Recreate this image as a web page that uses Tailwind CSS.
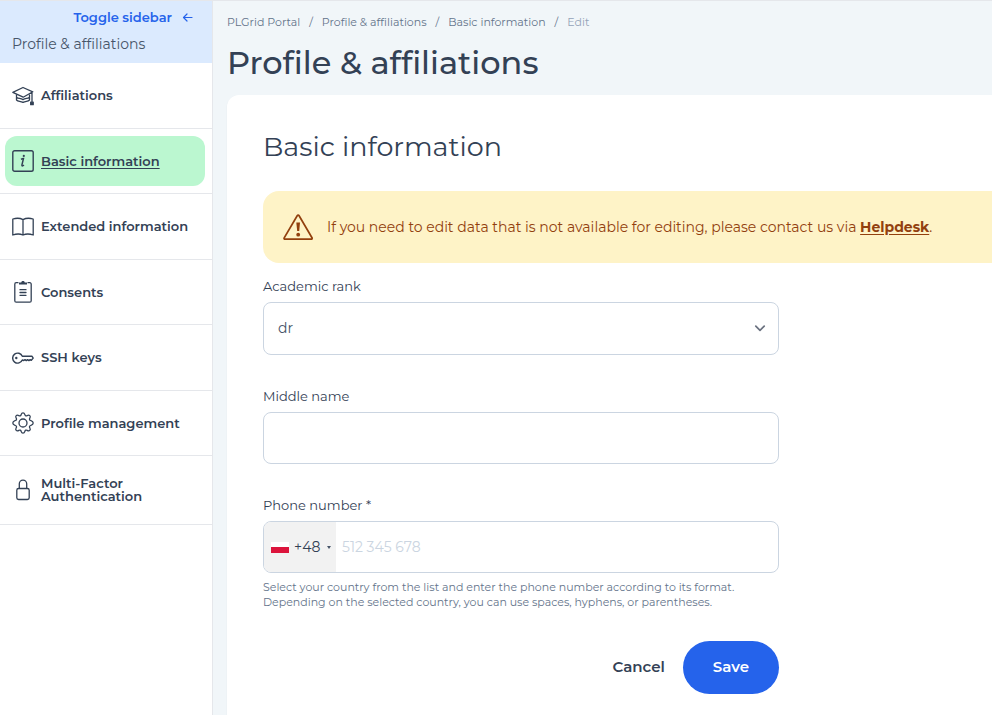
<!DOCTYPE html>
<html lang="en">
<head>
<meta charset="utf-8">
<meta name="viewport" content="width=device-width, initial-scale=1">
<title>Profile &amp; affiliations</title>
<script src="https://cdn.jsdelivr.net/npm/@tailwindcss/browser@4"></script>
</head>
<body class="flex min-h-screen overflow-x-hidden border-t border-[#e5e7eb] bg-[#f1f6f9] font-[Montserrat,Inter,sans-serif] text-[#334155]">
  <aside class="w-[213px] shrink-0 border-r border-[#e5e7eb] bg-white">
    <header class="flex h-[62px] flex-col justify-between bg-[#dbeafe] pt-[6px] pb-[9px]">
      <button type="button" class="flex items-center justify-end gap-[10px] pr-[19px] text-[13px] leading-5 font-semibold text-[#2563eb]">
        Toggle sidebar
        <svg class="size-[11px]" viewBox="0 0 11 11" fill="none" stroke="currentColor" stroke-width="1.2" stroke-linecap="round" stroke-linejoin="round"><path d="M10 5.5H1.5M5 2 1.5 5.500 5 9"/></svg>
      </button>
      <p class="pl-3 text-[14px] leading-5 text-[#475569]">Profile &amp; affiliations</p>
    </header>
    <nav aria-label="Profile">
      <ul class="text-[13px] leading-[13px] font-semibold">
        <li class="flex border-b border-[#e5e7eb] p-[7px] pl-[5px] odd:min-h-[66px] even:min-h-[65px]">
          <a href="#" class="flex flex-1 items-center gap-[7px] rounded-xl px-[7px]">
            <svg class="size-[22px] shrink-0" viewBox="0 0 22 22" fill="none" stroke="currentColor" stroke-width="1.3" stroke-linejoin="round" stroke-linecap="round"><path d="M.8 7.3 11 2.5l9.8 4.3-9.6 5.4zM20 7.5v9"/><path d="M4.500 10v2.200c1.700 1.700 3.800.8 6.500 2.400 2.700-1.600 4.800-.7 6.500-2.400V10"/><path d="M4.500 12.700V15c1.700 1.700 3.800.8 6.500 2.400 2.700-1.600 4.800-.7 6.500-2.400v-2.300"/><path d="M18.700 17.200h2.500v2.500h-2.500z" fill="currentColor"/></svg>
            Affiliations
          </a>
        </li>
        <li class="flex border-b border-[#e5e7eb] p-[7px] pl-[5px] odd:min-h-[66px] even:min-h-[65px]">
          <a href="#" aria-current="page" class="flex flex-1 items-center gap-[7px] rounded-xl bg-[#bbf7d0] px-[7px] underline underline-offset-2">
            <svg class="size-[22px] shrink-0" viewBox="0 0 22 22" fill="none" stroke="currentColor" stroke-width="1.4"><rect x=".8" y=".8" width="20.400" height="20.400" rx="1.800"/><path d="M9 9.300c1-.6 1.800-.9 2.500-.8L9.900 15.200c-.1.900.8.900 2.100 0" stroke-width="1.500"/><circle cx="11.800" cy="5.900" r="1.100" fill="currentColor" stroke="none"/></svg>
            Basic information
          </a>
        </li>
        <li class="flex border-b border-[#e5e7eb] p-[7px] pl-[5px] odd:min-h-[66px] even:min-h-[65px]">
          <a href="#" class="flex flex-1 items-center gap-[7px] rounded-xl px-[7px]">
            <svg class="size-[22px] shrink-0" viewBox="0 0 22 22" fill="none" stroke="currentColor" stroke-width="1.300" stroke-linejoin="round" stroke-linecap="round"><path d="M11 3.600C8 2 4.500 1.900.8 3v16c3.700-1.300 7.200-1.300 10.200 0 3-1.300 6.500-1.300 10.200 0V3C17.500 1.900 14 2 11 3.600zV19"/></svg>
            Extended information
          </a>
        </li>
        <li class="flex border-b border-[#e5e7eb] p-[7px] pl-[5px] odd:min-h-[66px] even:min-h-[65px]">
          <a href="#" class="flex flex-1 items-center gap-[7px] rounded-xl px-[7px]">
            <svg class="size-[22px] shrink-0" viewBox="0 0 22 22" fill="none" stroke="currentColor" stroke-width="1.300" stroke-linecap="round"><path d="M6 1.700H4.200A1.500 1.500 0 0 0 2.800 3.200v16.500c0 .8.600 1.500 1.400 1.500h13.600c.8 0 1.400-.7 1.400-1.500V3.200c0-.8-.6-1.500-1.400-1.500H16M8 8.700h6M8 11.500h6M8 14.300h6"/><path d="M7 3.500V1.500h2.200C9.500.4 10.200 0 11 0s1.500.4 1.800 1.500H15v2z" fill="currentColor" stroke="none"/></svg>
            Consents
          </a>
        </li>
        <li class="flex border-b border-[#e5e7eb] p-[7px] pl-[5px] odd:min-h-[66px] even:min-h-[65px]">
          <a href="#" class="flex flex-1 items-center gap-[7px] rounded-xl px-[7px]">
            <svg class="size-[22px] shrink-0" viewBox="0 0 22 22" fill="none" stroke="currentColor" stroke-width="1.400" stroke-linejoin="round"><path d="M10.300 9.200A5 5 0 1 0 10.300 13l1.500.5 1.200-.9 1.300 1 1.300-1 1.300 1 1.300-1 1.100.7 1.900-2.200-1.300-1.900z"/><circle cx="4.300" cy="11" r="1.200" fill="currentColor" stroke="none"/></svg>
            SSH keys
          </a>
        </li>
        <li class="flex border-b border-[#e5e7eb] p-[7px] pl-[5px] odd:min-h-[66px] even:min-h-[65px]">
          <a href="#" class="flex flex-1 items-center gap-[7px] rounded-xl px-[7px]">
            <svg class="size-[22px] shrink-0" viewBox="0 0 22 22" fill="none" stroke="currentColor" stroke-width="1.300" stroke-linejoin="round"><path d="M11 .8c1.500 0 1.500.7 1.900 2 .3 1 1.200 1.400 2.100.9 1.200-.7 1.800-1.100 2.800-.1s.6 1.600-.1 2.800c-.5.900-.1 1.800.9 2.100 1.300.4 2.600.6 2.600 2.500s-1.300 2.100-2.600 2.500c-1 .3-1.400 1.200-.9 2.100.7 1.200 1.100 1.800.1 2.800s-1.600.6-2.800-.1c-.9-.5-1.800-.1-2.100.9-.4 1.300-.4 2-1.900 2s-1.500-.7-1.900-2c-.3-1-1.200-1.400-2.100-.9-1.200.7-1.800 1.100-2.800.1s-.6-1.600.1-2.800c.5-.9.100-1.800-.9-2.100C2.100 13.100.8 12.900.8 11s1.300-2.100 2.600-2.500c1-.3 1.400-1.200.9-2.100-.7-1.200-1.100-1.800-.1-2.800s1.600-.6 2.800.1c.9.500 1.800.1 2.100-.9.400-1.300.4-2 1.900-2z"/><circle cx="11" cy="11" r="4"/></svg>
            Profile management
          </a>
        </li>
        <li class="flex min-h-[69px] border-b border-[#e5e7eb] p-[7px] pl-[5px]">
          <a href="#" class="flex flex-1 items-center gap-[7px] rounded-xl px-[7px]">
            <svg class="size-[22px] shrink-0" viewBox="0 0 22 22" fill="none" stroke="currentColor" stroke-width="1.300"><rect x="4.800" y="9.500" width="12.400" height="11" rx="1.800"/><path d="M7.300 9.500V4.800a3.700 3.700 0 0 1 7.400 0v4.700"/></svg>
            Multi-Factor Authentication
          </a>
        </li>
      </ul>
    </nav>
  </aside>

  <main class="flex min-w-0 flex-1 flex-col pl-[14px]">
    <nav aria-label="Breadcrumb" class="pt-[13px]">
      <ol class="flex gap-[9px] text-[11px] leading-4 text-[#64748b]">
        <li><a href="#">PLGrid Portal</a></li>
        <li aria-hidden="true">/</li>
        <li><a href="#">Profile &amp; affiliations</a></li>
        <li aria-hidden="true">/</li>
        <li><a href="#">Basic information</a></li>
        <li aria-hidden="true">/</li>
        <li class="text-[#94a3b8]" aria-current="page">Edit</li>
      </ol>
    </nav>
    <h1 class="pt-[13px] pb-[12px] text-[32px] leading-10 font-medium">Profile &amp; affiliations</h1>

    <section class="flex-1 rounded-tl-xl bg-white pt-[34px] pb-5 pl-9 shadow-xs">
      <h2 class="text-[27px] leading-9">Basic information</h2>
      <div class="mt-[26px] flex min-h-[72px] items-center gap-[14px] rounded-l-2xl bg-[#fef3c7] pl-5 text-[14px] text-[#92400e]">
        <svg class="size-[30px] shrink-0" viewBox="0 0 30 30" fill="none" stroke="currentColor" stroke-width="1.700" stroke-linejoin="round"><path d="M14.200 3.700a1.100 1.100 0 0 1 1.900 0L29 25.800c.4.700 0 1.400-.8 1.400H2c-.8 0-1.200-.7-.8-1.400z"/><path d="M13.300 10.500h3.700l-.8 8.500h-2z" fill="currentColor" stroke="none"/><circle cx="15.200" cy="22.700" r="1.900" fill="currentColor" stroke="none"/></svg>
        <p>If you need to edit data that is not available for editing, please contact us via <a href="#" class="font-bold underline underline-offset-2">Helpdesk</a>.</p>
      </div>

      <form class="mt-[13px] max-w-[516px]">
        <div class="flex flex-col gap-[6px]">
          <label for="rank" class="text-[13px] leading-5 text-[#334155]">Academic rank</label>
          <div class="relative">
            <select id="rank" class="block h-[53px] w-full appearance-none rounded-lg border border-[#cbd5e1] bg-white px-[14px] text-[14px] text-[#475569]"><option>dr</option></select>
            <svg class="pointer-events-none absolute top-[20px] right-[13px] size-3" viewBox="0 0 12 12" fill="none" stroke="#6b7280" stroke-width="1.700" stroke-linecap="round" stroke-linejoin="round"><path d="m1.800 4.200 4.200 4.200 4.200-4.200"/></svg>
          </div>
        </div>
        <div class="mt-[31px] flex flex-col gap-[6px]">
          <label for="middle" class="text-[13px] leading-5 text-[#334155]">Middle name</label>
          <input id="middle" type="text" class="h-[52px] rounded-lg border border-[#cbd5e1] bg-white px-[14px] text-[14px]">
        </div>
        <div class="mt-[31px] flex flex-col gap-[6px]">
          <label for="phone" class="text-[13px] leading-5 text-[#334155]">Phone number *</label>
          <div class="flex h-[52px] overflow-hidden rounded-lg border border-[#cbd5e1] bg-white">
            <div class="relative w-[72px] shrink-0">
              <select aria-label="Country code" class="h-full w-full appearance-none bg-[#f2f2f2] pl-[30px] text-[14px]"><option>+48</option></select>
              <span class="pointer-events-none absolute top-[20px] left-[7px] h-[11px] w-[18px] border-b-6 border-[#dc143c] bg-white"></span>
              <span class="pointer-events-none absolute top-[24px] right-[5px] border-x-2 border-t-3 border-x-transparent border-t-[#475569]"></span>
            </div>
            <input id="phone" type="tel" placeholder="512 345 678" class="min-w-0 flex-1 px-[6px] text-[14px] placeholder:text-[#cbd5e1]">
          </div>
        </div>
        <p class="mt-[7px] text-[11px] leading-[15px] text-[#64748b]">Select your country from the list and enter the phone number according to its format.<br>Depending on the selected country, you can use spaces, hyphens, or parentheses.</p>
        <div class="mt-[31px] flex h-[53px] justify-end gap-[18px] text-[15px] font-semibold">
          <button type="button">Cancel</button>
          <button type="submit" class="rounded-full bg-[#2563eb] px-[30px] text-white">Save</button>
        </div>
      </form>
    </section>
  </main>
</body>
</html>
